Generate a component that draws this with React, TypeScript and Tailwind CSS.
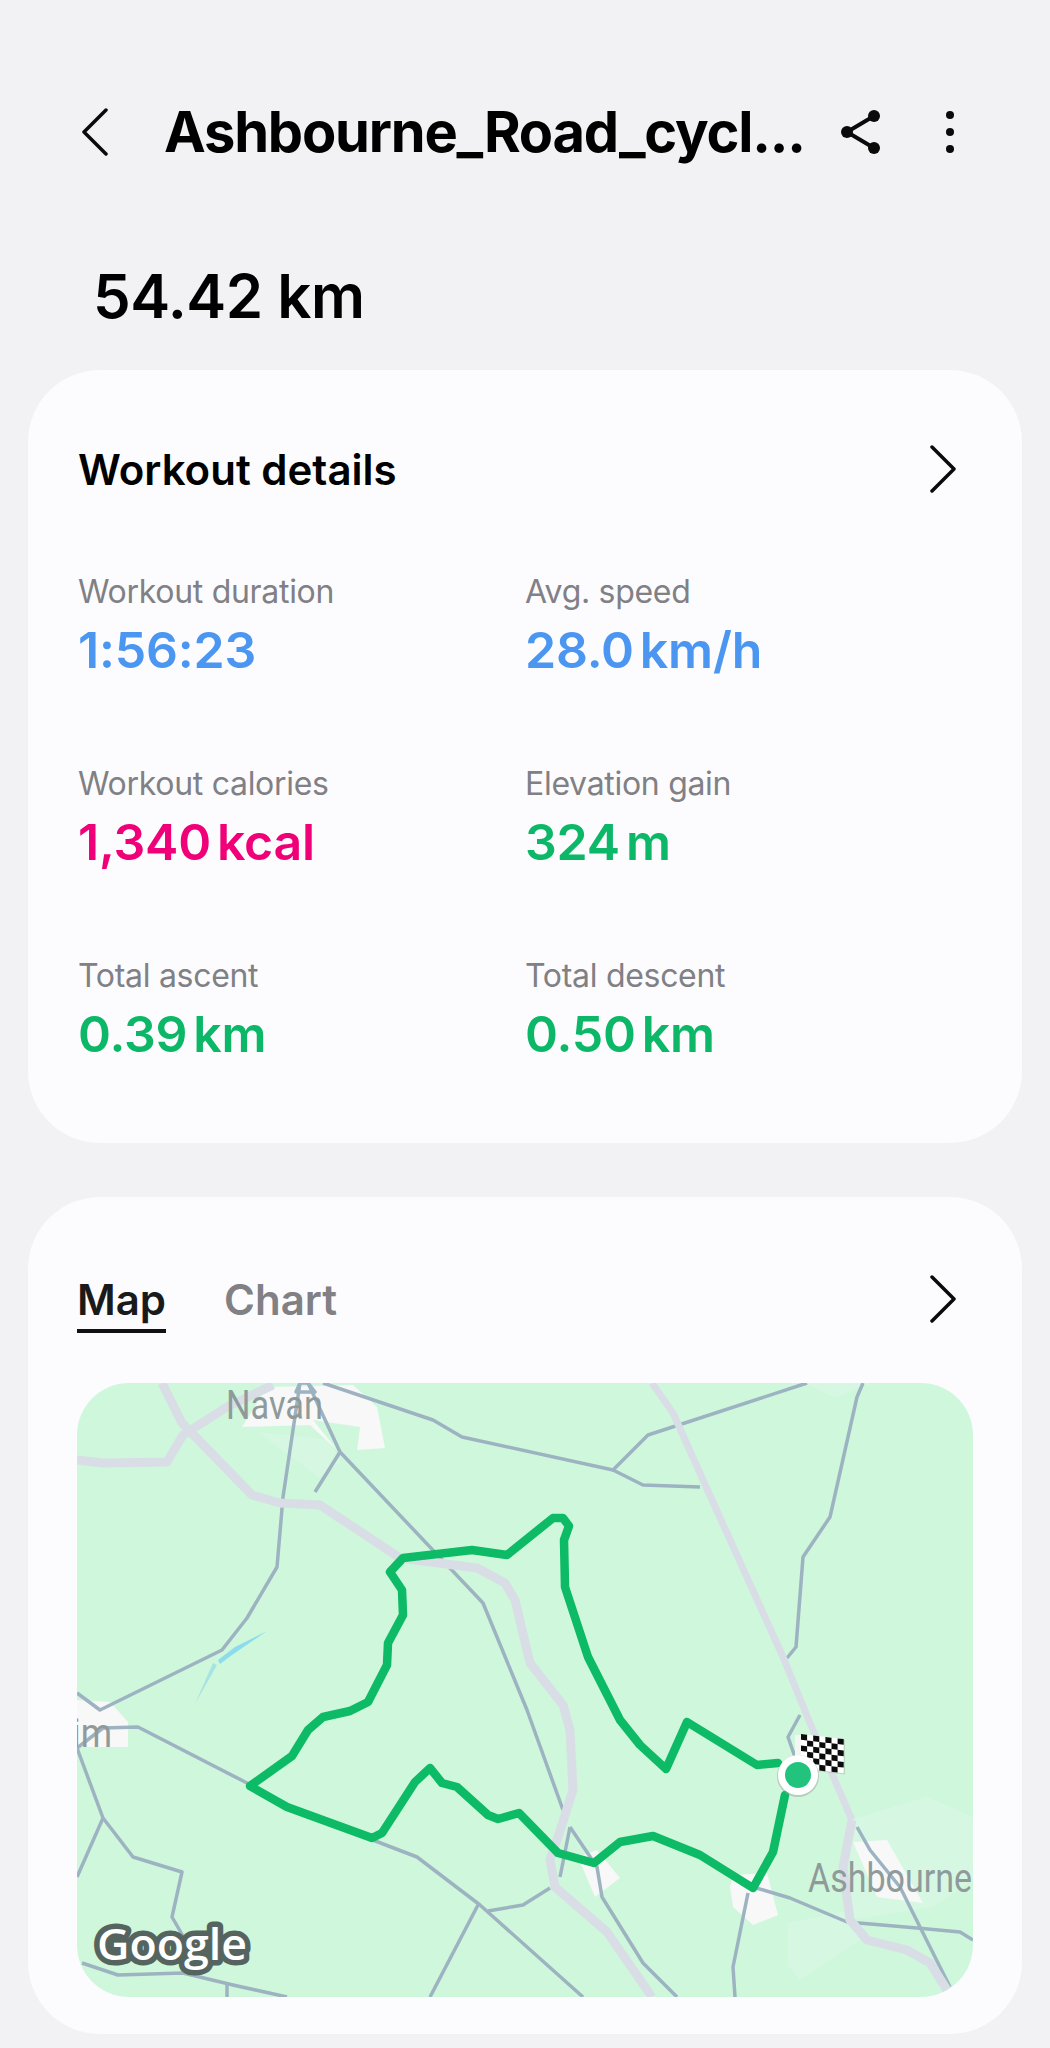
const font = { fontFamily: '"Inter", "Liberation Sans", sans-serif' };

const ROUTE =
  "778,1763 757,1765 687,1722 666,1769 640,1745 620,1720 588,1657 565,1587 564,1540 569,1526 563,1518 553,1518 507,1555 472,1550 403,1558 390,1572 402,1590 403,1615 388,1643 387,1665 368,1702 350,1711 323,1717 308,1730 292,1756 250,1786 287,1807 372,1838 382,1833 415,1782 430,1768 442,1783 457,1787 488,1815 498,1819 519,1813 558,1853 594,1863 620,1842 653,1836 700,1855 753,1888 773,1852 785,1795";

const HIGHWAYS = [
  "162,1383 182,1423 252,1495 280,1503 320,1505 400,1558 477,1568 505,1583 515,1600 530,1663 563,1705 570,1730 573,1790 558,1837 550,1860 555,1887 607,1932 652,1997",
  "77,1460 103,1463 167,1462 183,1435 227,1407 273,1385",
];

const NARROW_HIGHWAY = "652,1383 673,1413 703,1480 783,1657 810,1723 852,1820";
const SOUTH_HIGHWAY = "852,1820 843,1867 850,1920 867,1940 907,1950 930,1963 947,1990";

const ROADS = [
  "323,1383 433,1420 462,1437 613,1470 648,1435 807,1383",
  "613,1470 643,1485 700,1487",
  "300,1383 283,1497 277,1567 247,1618 222,1650 100,1710 77,1693",
  "308,1383 340,1452 483,1603 527,1710 563,1810",
  "340,1452 315,1492",
  "300,1383 308,1383 315,1392 296,1392 300,1383",
  "863,1383 857,1397 830,1517 803,1557 796,1647 787,1658",
  "77,1748 103,1728 138,1727 247,1783 287,1807 417,1857 480,1905 583,1997",
  "77,1748 103,1818 133,1857 182,1872 172,1917 187,1943",
  "103,1818 77,1877",
  "82,1963 118,1975 183,1973 233,1985 287,1997",
  "227,1985 227,1997",
  "478,1905 430,1997",
  "488,1911 523,1905 550,1888",
  "570,1827 597,1867 602,1897 643,1963 677,1997",
  "570,1827 560,1877",
  "748,1893 733,1967 735,1997",
  "753,1887 790,1898 847,1922 917,1928 960,1932 973,1940",
  "857,1827 870,1850 900,1887 950,1987",
  "800,1715 788,1737 795,1757",
];

function MapArt() {
  const cells: React.ReactElement[] = [];
  for (let r = 0; r < 6; r++) {
    for (let c = 0; c < 7; c++) {
      if ((r + c) % 2 === 0) {
        cells.push(<rect key={`${r}-${c}`} x={c * 6.1} y={r * 5.7} width={6.1} height={5.7} fill="#0b0b0b" />);
      }
    }
  }
  return (
    <svg viewBox="77 1383 896 614" className="block h-full w-full">
      <g fill="#d6f8e3">
        <polygon points="788,1923 850,1910 860,1940 800,1980 788,1965" />
        <polygon points="850,1820 927,1797 973,1817 973,1880 933,1907 850,1920" />
        <polygon points="258,1432 330,1440 340,1462 320,1478" />
        <polygon points="805,1383 870,1383 835,1398" />
      </g>
      <g fill="#f7f8f7">
        <polygon points="242,1427 267,1387 353,1385 377,1407 385,1448 357,1450 360,1427 313,1420 337,1450 310,1425" />
        <polygon points="77,1700 110,1702 128,1722 128,1747 77,1747" />
        <polygon points="578,1857 597,1850 620,1878 595,1897" />
        <polygon points="730,1887 733,1875 767,1873 778,1915 753,1925 733,1907" />
        <polygon points="853,1842 887,1840 923,1903 877,1897" />
      </g>
      <polygon points="218,1660 235,1647 267,1631 232,1655 220,1664" fill="#8ddcec" />
      <polygon points="213,1663 217,1665 195,1704" fill="#a6e3e4" />
      <g fill="none" stroke="#9db3c1" strokeWidth="3.5" strokeLinejoin="round">
        {ROADS.map((p) => (
          <polyline key={p} points={p} />
        ))}
      </g>
      <g fill="none" stroke="#d9dee6" strokeLinejoin="round">
        {HIGHWAYS.map((p) => (
          <polyline key={p} points={p} strokeWidth="9" />
        ))}
        <polyline points={NARROW_HIGHWAY} strokeWidth="7" />
        <polyline points={SOUTH_HIGHWAY} strokeWidth="9" />
      </g>
      <g fill="#8f9a9b" style={{ fontFamily: '"Roboto", sans-serif' }}>
        <text x="226" y="1419" fontSize="41" textLength="97" lengthAdjust="spacingAndGlyphs">Navan</text>
        <text x="808" y="1892" fontSize="41" textLength="164" lengthAdjust="spacingAndGlyphs">Ashbourne</text>
        <text x="72" y="1747" fontSize="41" textLength="40" lengthAdjust="spacingAndGlyphs">im</text>
      </g>
      <polyline points={ROUTE} fill="none" stroke="#0dba65" strokeWidth="8.5" strokeLinejoin="round" strokeLinecap="round" />
      <rect x="795" y="1735" width="8" height="24" fill="#f4f6f4" />
      <g transform="matrix(1 0.12 0 1 801 1734)">
        <rect x="1" y="1" width="43" height="34.2" fill="#8a9a90" fillOpacity="0.35" />
        <rect width="42.7" height="34.2" fill="#ffffff" />
        {cells}
      </g>
      <circle cx="798" cy="1776" r="21" fill="#9aa5a0" fillOpacity="0.5" />
      <circle cx="798" cy="1775" r="20" fill="#ffffff" />
      <circle cx="798" cy="1775" r="13" fill="#22c37d" />
      <text
        x="97"
        y="1960"
        fontSize="44"
        fontWeight="600"
        textLength="150"
        lengthAdjust="spacingAndGlyphs"
        fill="#ffffff"
        stroke="#56645f"
        strokeWidth="11"
        strokeLinejoin="round"
        style={{ fontFamily: '"Open Sans", sans-serif', paintOrder: "stroke" }}
      >
        Google
      </text>
    </svg>
  );
}

function Chevron({ left = false }: { left?: boolean }) {
  return (
    <svg viewBox="0 0 26 48" className="h-[48px] w-[26px]" fill="none" stroke="#0a0a0a" strokeWidth="3.5" strokeLinecap="round" strokeLinejoin="round">
      <polyline points={left ? "24,2 2,24 24,46" : "2,2 24,24 2,46"} />
    </svg>
  );
}

function Stat({ label, value, unit, color }: { label: string; value: string; unit?: string; color: string }) {
  return (
    <div>
      <div className="h-[49px] text-[32px] leading-[42px] tracking-[-0.3px] text-[#808085]">{label}</div>
      <div className={`flex h-[60px] gap-[6px] text-[50px] font-semibold leading-[60px] tracking-[-0.2px] ${color}`}>
        <span>{value}</span>
        {unit && <span>{unit}</span>}
      </div>
    </div>
  );
}

export default function App() {
  return (
    <div className="h-[2048px] w-full overflow-hidden bg-[#f2f2f4] pt-[92px]" style={font}>
      <header className="flex h-[80px] items-center pl-[82px] pr-[96px]">
        <Chevron left />
        <h1 className="ml-[56px] flex-1 whitespace-nowrap text-[56px] font-bold leading-[80px] tracking-[-1.2px] text-black">
          Ashbourne_Road_cycl...
        </h1>
        <svg viewBox="0 0 40 44" className="mr-[65px] h-[44px] w-[40px]" fill="#0a0a0a">
          <polyline points="33,6 6,22 33,38" fill="none" stroke="#0a0a0a" strokeWidth="4" />
          <circle cx="33" cy="6" r="6" />
          <circle cx="6" cy="22" r="6" />
          <circle cx="33" cy="38" r="6" />
        </svg>
        <div className="flex flex-col gap-[9px]">
          <span className="h-[8px] w-[8px] rounded-full bg-[#0a0a0a]" />
          <span className="h-[8px] w-[8px] rounded-full bg-[#0a0a0a]" />
          <span className="h-[8px] w-[8px] rounded-full bg-[#0a0a0a]" />
        </div>
      </header>

      <div className="mt-[84px] h-[80px] pl-[93px] text-[60px] font-semibold leading-[80px] tracking-[-0.5px] text-black">54.42 km</div>

      <section className="mx-[28px] mt-[34px] rounded-[72px] bg-[#fcfcfe] pb-[79px] pl-[50px] pr-[66px] pt-[67px]">
        <div className="flex h-[64px] items-center justify-between">
          <h2 className="pt-[2px] text-[42px] font-semibold leading-[62px] text-black">Workout details</h2>
          <Chevron />
        </div>
        <div className="mt-[70px] grid grid-cols-[447px_1fr] gap-y-[83px]">
          <Stat label="Workout duration" value="1:56:23" color="text-[#4a96f0]" />
          <Stat label="Avg. speed" value="28.0" unit="km/h" color="text-[#4a96f0]" />
          <Stat label="Workout calories" value="1,340" unit="kcal" color="text-[#ef0078]" />
          <Stat label="Elevation gain" value="324" unit="m" color="text-[#0cb868]" />
          <Stat label="Total ascent" value="0.39" unit="km" color="text-[#0cb868]" />
          <Stat label="Total descent" value="0.50" unit="km" color="text-[#0cb868]" />
        </div>
      </section>

      <section className="mx-[28px] mt-[54px] rounded-[72px] bg-[#fcfcfe] px-[49px] pb-[37px]">
        <div className="flex h-[186px] items-start justify-between pr-[17px] pt-[78px]">
          <div className="flex gap-[58px] text-[42px] font-semibold leading-[50px]">
            <div className="h-[58px] border-b-[4px] border-[#111111] text-[#1a1a1a]">Map</div>
            <div className="text-[#808085]">Chart</div>
          </div>
          <Chevron />
        </div>
        <div className="h-[614px] overflow-hidden rounded-[52px] bg-[#cff7dc]">
          <MapArt />
        </div>
      </section>
    </div>
  );
}
